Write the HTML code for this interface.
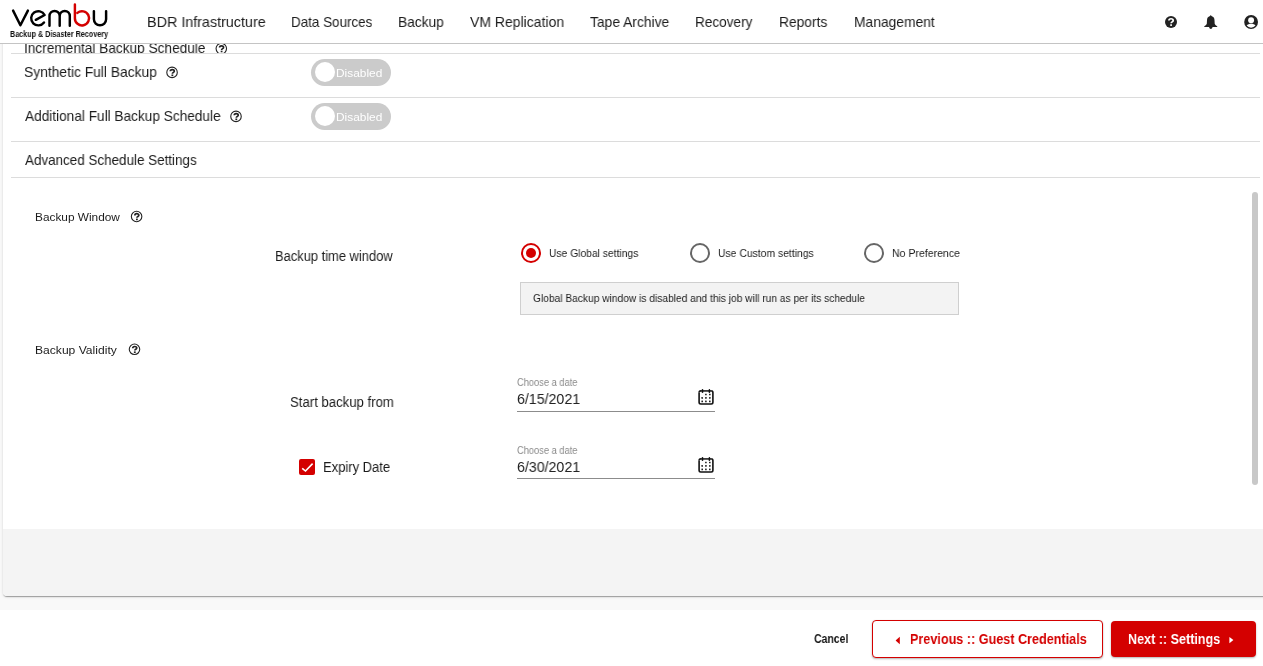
<!DOCTYPE html>
<html><head><meta charset="utf-8"><style>
html,body{margin:0;padding:0;width:1263px;height:666px;overflow:hidden;background:#fff;font-family:"Liberation Sans",sans-serif;}
.t{position:absolute;white-space:nowrap;will-change:transform;}
.a{position:absolute;}
.ln{position:absolute;height:1px;background:#dcdcdc;}
</style></head><body>
<div class="a" style="left:0;top:44px;width:1263px;height:566px;background:#f9f9f9"></div>
<div class="a" style="left:3px;top:-10px;width:1270px;height:606px;background:#fff;border-radius:4px;box-shadow:0 2px 1px -1px rgba(0,0,0,.2), 0 1px 1px 0 rgba(0,0,0,.14), 0 1px 3px 0 rgba(0,0,0,.12)"></div>
<div class="a" style="left:3px;top:529px;width:1260px;height:67px;background:#f4f4f4;border-radius:0 0 0 4px"></div>
<div class="a" style="left:0;top:44px;width:1263px;height:9px;overflow:hidden"><div class="t" style="left:24.03px;top:-2.99px;font-size:14.5px;line-height:14.5px;color:#1c1c1c;font-weight:normal;transform:scaleX(0.9422);transform-origin:0 0;">Incremental Backup Schedule</div>
<svg class="a" style="left:214px;top:-3px" width="14" height="14" viewBox="0 0 14 14"><g transform="translate(7.30 7.60)"><circle cx="0" cy="0" r="5.25" fill="none" stroke="#222" stroke-width="1.1"/><path d="M-1.75 -1.1 C-1.75 -3.35 2.25 -3.35 2.25 -1.2 C2.25 -0.1 0.3 0.1 0.3 1.3" fill="none" stroke="#222" stroke-width="1.7"/><rect x="-0.6" y="2.1" width="1.8" height="1.6" fill="#222"/></g></svg>
</div>
<div class="ln" style="left:11px;top:53px;width:1249px"></div>
<div class="ln" style="left:11px;top:97px;width:1249px"></div>
<div class="ln" style="left:11px;top:141px;width:1249px"></div>
<div class="ln" style="left:11px;top:177px;width:1249px"></div>
<div class="t" style="left:24.41px;top:65.01px;font-size:14.5px;line-height:14.5px;color:#1c1c1c;font-weight:normal;transform:scaleX(0.9535);transform-origin:0 0;">Synthetic Full Backup</div>
<svg class="a" style="left:165px;top:65px" width="14" height="14" viewBox="0 0 14 14"><g transform="translate(7.05 7.40)"><circle cx="0" cy="0" r="5.25" fill="none" stroke="#222" stroke-width="1.1"/><path d="M-1.75 -1.1 C-1.75 -3.35 2.25 -3.35 2.25 -1.2 C2.25 -0.1 0.3 0.1 0.3 1.3" fill="none" stroke="#222" stroke-width="1.7"/><rect x="-0.6" y="2.1" width="1.8" height="1.6" fill="#222"/></g></svg>
<div class="a" style="left:311px;top:59px;width:80px;height:27px;border-radius:13.5px;background:#cbcbcb"></div>
<div class="a" style="left:314.5px;top:61.7px;width:20.5px;height:20.5px;border-radius:50%;background:#fff"></div>
<div class="t" style="left:336.02px;top:67.92px;font-size:11.5px;line-height:11.5px;color:#fff;font-weight:normal;transform:scaleX(1.0336);transform-origin:0 0;">Disabled</div>
<div class="t" style="left:24.62px;top:109.11px;font-size:14.5px;line-height:14.5px;color:#1c1c1c;font-weight:normal;transform:scaleX(0.9405);transform-origin:0 0;">Additional Full Backup Schedule</div>
<svg class="a" style="left:229px;top:109px" width="14" height="14" viewBox="0 0 14 14"><g transform="translate(7.00 7.40)"><circle cx="0" cy="0" r="5.25" fill="none" stroke="#222" stroke-width="1.1"/><path d="M-1.75 -1.1 C-1.75 -3.35 2.25 -3.35 2.25 -1.2 C2.25 -0.1 0.3 0.1 0.3 1.3" fill="none" stroke="#222" stroke-width="1.7"/><rect x="-0.6" y="2.1" width="1.8" height="1.6" fill="#222"/></g></svg>
<div class="a" style="left:311px;top:103px;width:80px;height:27px;border-radius:13.5px;background:#cbcbcb"></div>
<div class="a" style="left:314.5px;top:105.7px;width:20.5px;height:20.5px;border-radius:50%;background:#fff"></div>
<div class="t" style="left:336.02px;top:111.92px;font-size:11.5px;line-height:11.5px;color:#fff;font-weight:normal;transform:scaleX(1.0336);transform-origin:0 0;">Disabled</div>
<div class="t" style="left:24.62px;top:153.01px;font-size:14.5px;line-height:14.5px;color:#1c1c1c;font-weight:normal;transform:scaleX(0.9259);transform-origin:0 0;">Advanced Schedule Settings</div>
<div class="a" style="left:1252px;top:192px;width:6px;height:293px;border-radius:3px;background:#c8c8c8"></div>
<div class="t" style="left:34.90px;top:211.91px;font-size:11.5px;line-height:11.5px;color:#1c1c1c;font-weight:normal;transform:scaleX(1.0300);transform-origin:0 0;">Backup Window</div>
<svg class="a" style="left:129px;top:209px" width="14" height="14" viewBox="0 0 14 14"><g transform="translate(7.60 7.50)"><circle cx="0" cy="0" r="5.25" fill="none" stroke="#222" stroke-width="1.1"/><path d="M-1.75 -1.1 C-1.75 -3.35 2.25 -3.35 2.25 -1.2 C2.25 -0.1 0.3 0.1 0.3 1.3" fill="none" stroke="#222" stroke-width="1.7"/><rect x="-0.6" y="2.1" width="1.8" height="1.6" fill="#222"/></g></svg>
<div class="t" style="left:274.70px;top:248.82px;font-size:14.25px;line-height:14.25px;color:#1c1c1c;font-weight:normal;transform:scaleX(0.9058);transform-origin:0 0;">Backup time window</div>
<svg class="a" style="left:521.2px;top:242.9px" width="20" height="20" viewBox="0 0 20 20"><circle cx="10" cy="10" r="9" fill="none" stroke="#d40000" stroke-width="2"/><circle cx="10" cy="10" r="5" fill="#d40000"/></svg>
<div class="t" style="left:548.68px;top:247.91px;font-size:11.5px;line-height:11.5px;color:#1c1c1c;font-weight:normal;transform:scaleX(0.8957);transform-origin:0 0;">Use Global settings</div>
<svg class="a" style="left:690px;top:242.9px" width="20" height="20" viewBox="0 0 20 20"><circle cx="10" cy="10" r="9" fill="none" stroke="#666" stroke-width="2"/></svg>
<div class="t" style="left:717.66px;top:247.91px;font-size:11.5px;line-height:11.5px;color:#1c1c1c;font-weight:normal;transform:scaleX(0.9024);transform-origin:0 0;">Use Custom settings</div>
<svg class="a" style="left:864px;top:242.9px" width="20" height="20" viewBox="0 0 20 20"><circle cx="10" cy="10" r="9" fill="none" stroke="#666" stroke-width="2"/></svg>
<div class="t" style="left:891.66px;top:247.91px;font-size:11.5px;line-height:11.5px;color:#1c1c1c;font-weight:normal;transform:scaleX(0.9164);transform-origin:0 0;">No Preference</div>
<div class="a" style="left:520px;top:282px;width:437px;height:31px;background:#f3f3f3;border:1px solid #cfcfcf"></div>
<div class="t" style="left:533.46px;top:292.82px;font-size:11.5px;line-height:11.5px;color:#1c1c1c;font-weight:normal;transform:scaleX(0.8877);transform-origin:0 0;">Global Backup window is disabled and this job will run as per its schedule</div>
<div class="t" style="left:35.17px;top:344.82px;font-size:11.5px;line-height:11.5px;color:#1c1c1c;font-weight:normal;transform:scaleX(1.0516);transform-origin:0 0;">Backup Validity</div>
<svg class="a" style="left:127px;top:342px" width="14" height="14" viewBox="0 0 14 14"><g transform="translate(7.50 7.30)"><circle cx="0" cy="0" r="5.25" fill="none" stroke="#222" stroke-width="1.1"/><path d="M-1.75 -1.1 C-1.75 -3.35 2.25 -3.35 2.25 -1.2 C2.25 -0.1 0.3 0.1 0.3 1.3" fill="none" stroke="#222" stroke-width="1.7"/><rect x="-0.6" y="2.1" width="1.8" height="1.6" fill="#222"/></g></svg>
<div class="t" style="left:289.72px;top:395.00px;font-size:14.25px;line-height:14.25px;color:#1c1c1c;font-weight:normal;transform:scaleX(0.9231);transform-origin:0 0;">Start backup from</div>
<div class="t" style="left:516.67px;top:377.90px;font-size:10.25px;line-height:10.25px;color:#8a8a8a;font-weight:normal;transform:scaleX(0.9054);transform-origin:0 0;">Choose a date</div>
<div class="t" style="left:516.75px;top:392.21px;font-size:14.5px;line-height:14.5px;color:#222;font-weight:normal;transform:scaleX(0.9779);transform-origin:0 0;">6/15/2021</div>
<div class="a" style="left:517px;top:410.5px;width:198px;height:1px;background:#8c8c8c"></div>
<svg class="a" style="left:698px;top:389px" width="16" height="16" viewBox="0 0 16 16"><path d="M1.1 3.6 V13.3 Q1.1 15.0 2.8 15.0 H13.2 Q14.9 15.0 14.9 13.3 V3.6 Q14.9 1.9 13.2 1.9" fill="none" stroke="#111" stroke-width="1.6"/><path d="M13.2 1.9 H2.8 Q1.1 1.9 1.1 3.6" fill="none" stroke="#111" stroke-width="1.6"/><line x1="2.8" y1="1.9" x2="13.2" y2="1.9" stroke="#fff" stroke-width="0.6" opacity="0.5"/><rect x="3.7" y="0.1" width="1.6" height="3.9" rx="0.8" fill="#111"/><rect x="10.6" y="0.1" width="1.6" height="3.9" rx="0.8" fill="#111"/><g fill="#222"><rect x="7.10" y="4.70" width="1.6" height="1.6" rx="0.3"/><rect x="11.00" y="4.70" width="1.6" height="1.6" rx="0.3"/><rect x="3.40" y="8.10" width="1.6" height="1.6" rx="0.3"/><rect x="7.10" y="8.10" width="1.6" height="1.6" rx="0.3"/><rect x="11.00" y="8.10" width="1.6" height="1.6" rx="0.3"/><rect x="3.40" y="11.60" width="1.6" height="1.6" rx="0.3"/><rect x="7.10" y="11.60" width="1.6" height="1.6" rx="0.3"/><rect x="11.00" y="11.60" width="1.6" height="1.6" rx="0.3"/></g></svg>
<div class="a" style="left:299px;top:459px;width:16px;height:16px;border-radius:2px;background:#d40000"></div>
<svg class="a" style="left:299px;top:459px" width="16" height="16" viewBox="0 0 16 16"><path d="M3.2 9.3 L6.5 12 L13.6 4.6" fill="none" stroke="#fff" stroke-width="1.6"/></svg>
<div class="t" style="left:323.05px;top:459.91px;font-size:14.25px;line-height:14.25px;color:#1c1c1c;font-weight:normal;transform:scaleX(0.9111);transform-origin:0 0;">Expiry Date</div>
<div class="t" style="left:516.67px;top:445.80px;font-size:10.25px;line-height:10.25px;color:#8a8a8a;font-weight:normal;transform:scaleX(0.9054);transform-origin:0 0;">Choose a date</div>
<div class="t" style="left:516.75px;top:460.11px;font-size:14.5px;line-height:14.5px;color:#222;font-weight:normal;transform:scaleX(0.9779);transform-origin:0 0;">6/30/2021</div>
<div class="a" style="left:517px;top:477.5px;width:198px;height:1px;background:#8c8c8c"></div>
<svg class="a" style="left:698px;top:457px" width="16" height="16" viewBox="0 0 16 16"><path d="M1.1 3.6 V13.3 Q1.1 15.0 2.8 15.0 H13.2 Q14.9 15.0 14.9 13.3 V3.6 Q14.9 1.9 13.2 1.9" fill="none" stroke="#111" stroke-width="1.6"/><path d="M13.2 1.9 H2.8 Q1.1 1.9 1.1 3.6" fill="none" stroke="#111" stroke-width="1.6"/><line x1="2.8" y1="1.9" x2="13.2" y2="1.9" stroke="#fff" stroke-width="0.6" opacity="0.5"/><rect x="3.7" y="0.1" width="1.6" height="3.9" rx="0.8" fill="#111"/><rect x="10.6" y="0.1" width="1.6" height="3.9" rx="0.8" fill="#111"/><g fill="#222"><rect x="7.10" y="4.70" width="1.6" height="1.6" rx="0.3"/><rect x="11.00" y="4.70" width="1.6" height="1.6" rx="0.3"/><rect x="3.40" y="8.10" width="1.6" height="1.6" rx="0.3"/><rect x="7.10" y="8.10" width="1.6" height="1.6" rx="0.3"/><rect x="11.00" y="8.10" width="1.6" height="1.6" rx="0.3"/><rect x="3.40" y="11.60" width="1.6" height="1.6" rx="0.3"/><rect x="7.10" y="11.60" width="1.6" height="1.6" rx="0.3"/><rect x="11.00" y="11.60" width="1.6" height="1.6" rx="0.3"/></g></svg>
<div class="a" style="left:0;top:0;width:1263px;height:43px;background:#fff;border-bottom:1px solid #c4c4c4"></div>
<svg class="a" style="left:0;top:0" width="120" height="30" viewBox="0 0 120 30">
<g fill="none" stroke="#000" stroke-width="2.45" stroke-linecap="round" stroke-linejoin="round">
<path d="M13.1 10.6 L20.4 25.3 L27.9 10.6"/>
<path d="M44.6 15 L35.8 19.8 M44.6 15 A7.1 7.1 0 1 0 44 22.5"/>
<path d="M49.5 25.8 V16 A5.1 5.1 0 0 1 59.7 16 V25.8 M59.7 16 A5.05 5.05 0 0 1 69.8 16 V25.8"/>
<path d="M93.9 11.1 V19.2 A6.1 6.1 0 0 0 106.1 19.2 V11.1"/>
</g>
<path d="M74.9 4.4 V18.2 A7.1 7.1 0 1 0 77.4 12.9" fill="none" stroke="#d40000" stroke-width="2.45" stroke-linecap="round"/>
</svg>
<div class="t" style="left:10.17px;top:29.50px;font-size:8.5px;line-height:8.5px;color:#111;font-weight:bold;transform:scaleX(0.8472);transform-origin:0 0;">Backup &amp; Disaster Recovery</div>
<div class="t" style="left:146.84px;top:14.92px;font-size:14.5px;line-height:14.5px;color:#1c1c1c;font-weight:normal;transform:scaleX(0.9885);transform-origin:0 0;">BDR Infrastructure</div>
<div class="t" style="left:290.67px;top:14.91px;font-size:14.5px;line-height:14.5px;color:#1c1c1c;font-weight:normal;transform:scaleX(0.9259);transform-origin:0 0;">Data Sources</div>
<div class="t" style="left:397.67px;top:14.91px;font-size:14.5px;line-height:14.5px;color:#1c1c1c;font-weight:normal;transform:scaleX(0.9467);transform-origin:0 0;">Backup</div>
<div class="t" style="left:470.43px;top:14.91px;font-size:14.5px;line-height:14.5px;color:#1c1c1c;font-weight:normal;transform:scaleX(0.9646);transform-origin:0 0;">VM Replication</div>
<div class="t" style="left:590.38px;top:14.92px;font-size:14.5px;line-height:14.5px;color:#1c1c1c;font-weight:normal;transform:scaleX(0.9536);transform-origin:0 0;">Tape Archive</div>
<div class="t" style="left:694.77px;top:14.91px;font-size:14.5px;line-height:14.5px;color:#1c1c1c;font-weight:normal;transform:scaleX(0.9370);transform-origin:0 0;">Recovery</div>
<div class="t" style="left:779.12px;top:14.91px;font-size:14.5px;line-height:14.5px;color:#1c1c1c;font-weight:normal;transform:scaleX(0.9510);transform-origin:0 0;">Reports</div>
<div class="t" style="left:853.54px;top:14.91px;font-size:14.5px;line-height:14.5px;color:#1c1c1c;font-weight:normal;transform:scaleX(0.9543);transform-origin:0 0;">Management</div>
<svg class="a" style="left:1164px;top:15px" width="14" height="14" viewBox="0 0 14 14"><circle cx="7" cy="7" r="6" fill="#222"/><path d="M4.9 5.4 C4.9 3.2 9.2 3.2 9.2 5.4 C9.2 6.9 7.1 6.9 7.1 8.3" fill="none" stroke="#fff" stroke-width="1.7"/><rect x="6.2" y="9.3" width="1.8" height="1.6" fill="#fff"/></svg>
<svg class="a" style="left:1203px;top:14px" width="16" height="16" viewBox="0 0 16 16"><path d="M7.75 1.0 L8.5 2.0 C10.6 2.6 11.5 4.2 11.5 6.2 L11.7 9.8 C12.0 10.8 13.2 11.8 14.3 12.4 V13.0 H1.2 V12.4 C2.3 11.8 3.5 10.8 3.8 9.8 L4.0 6.2 C4.0 4.2 4.9 2.6 7.0 2.0 Z" fill="#222"/><path d="M6.0 13.0 H9.6 L8.9 14.6 Q7.8 15.4 6.7 14.6 Z" fill="#222"/></svg>
<svg class="a" style="left:1243px;top:14px" width="16" height="16" viewBox="0 0 16 16"><circle cx="8.1" cy="8" r="6.9" fill="#222"/><circle cx="8.1" cy="6.3" r="2.95" fill="#fff"/><path d="M3.68 11.6 C4.5 10.3 6.2 9.75 8.1 9.75 C10.0 9.75 11.7 10.3 12.52 11.6 A5.7 5.7 0 0 1 3.68 11.6 Z" fill="#fff"/></svg>
<div class="t" style="left:813.55px;top:633.01px;font-size:12.5px;line-height:12.5px;color:#151515;font-weight:bold;transform:scaleX(0.8393);transform-origin:0 0;">Cancel</div>
<div class="a" style="left:872px;top:620px;width:229px;height:36px;border:1px solid #d40000;border-radius:4px;background:#fff;box-shadow:0 1px 2px rgba(0,0,0,0.3)"></div>
<svg class="a" style="left:894px;top:636px" width="8" height="9" viewBox="0 0 8 9"><path d="M5.8 0.8 V8.2 L1.6 4.5 Z" fill="#d40000"/></svg>
<div class="t" style="left:910.38px;top:630.81px;font-size:15.5px;line-height:15.5px;color:#d40000;font-weight:bold;transform:scaleX(0.8140);transform-origin:0 0;">Previous :: Guest Credentials</div>
<div class="a" style="left:1111px;top:621px;width:145px;height:36px;border-radius:4px;background:#d40000;box-shadow:0 1px 2px rgba(0,0,0,0.3)"></div>
<div class="t" style="left:1127.99px;top:630.81px;font-size:15.5px;line-height:15.5px;color:#fff;font-weight:bold;transform:scaleX(0.8115);transform-origin:0 0;">Next :: Settings</div>
<svg class="a" style="left:1228px;top:636px" width="8" height="9" viewBox="0 0 8 9"><path d="M1.4 1.0 V7.2 L5.4 4.1 Z" fill="#fff"/></svg>
</body></html>
